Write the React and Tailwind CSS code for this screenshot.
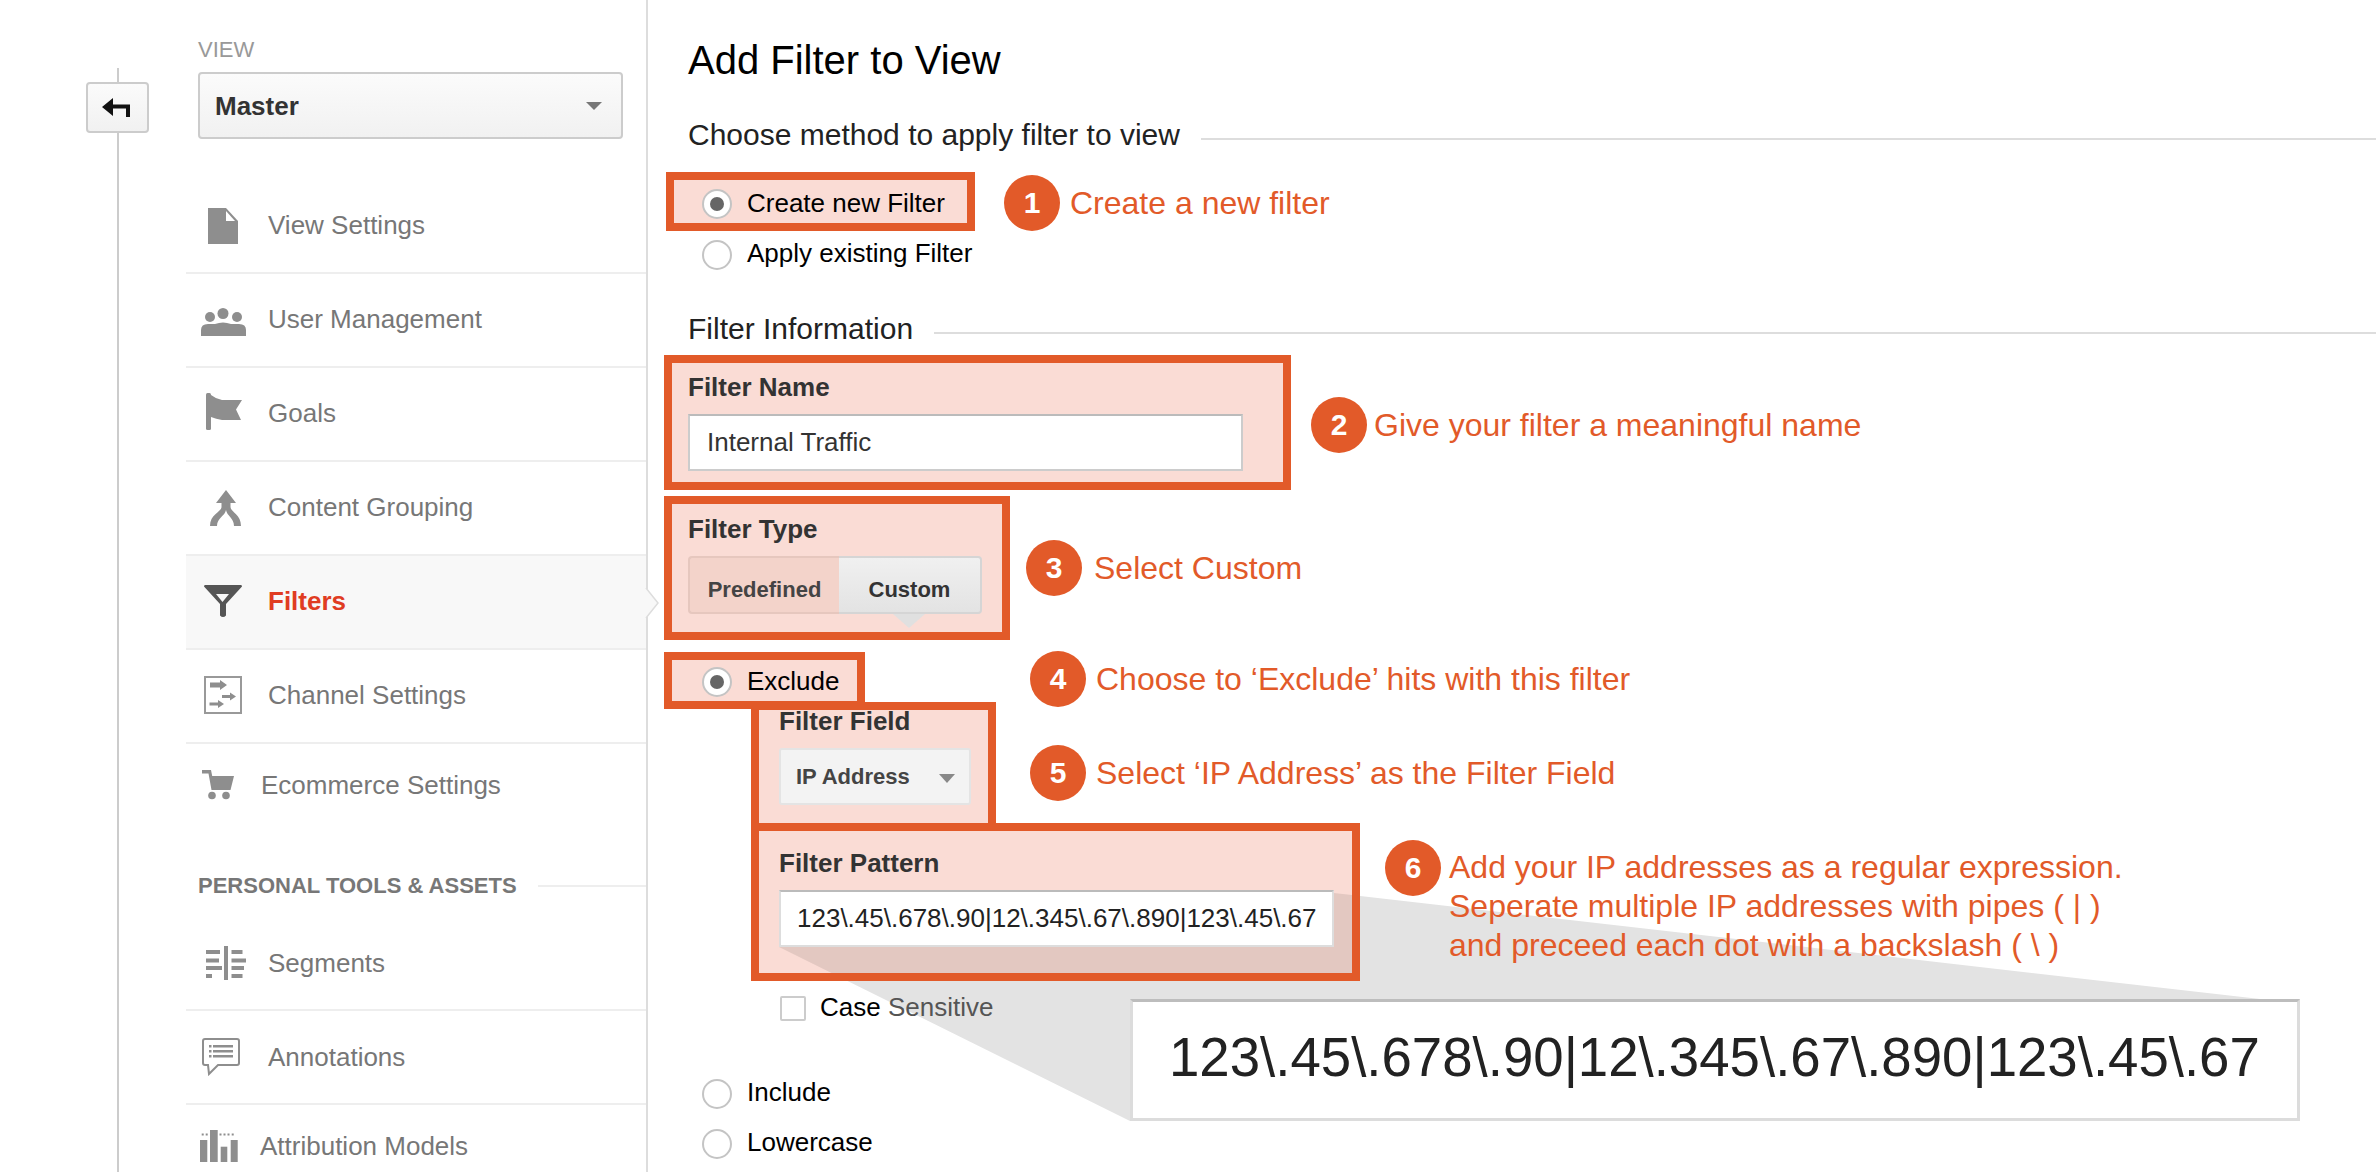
const GRAY = "#8e8e8e";

const FileIcon = () => (
  <svg viewBox="0 0 30 36" className="w-[30px] h-[36px]">
    <path d="M0 0H18L30 13V36H0Z" fill={GRAY} />
    <path d="M18 3L27 13H18Z" fill="#fff" />
  </svg>
);
const UsersIcon = () => (
  <svg viewBox="0 0 45 28" className="w-[45px] h-[28px] translate-y-[2px]">
    <circle cx="22" cy="5.5" r="5.5" fill={GRAY} />
    <circle cx="9" cy="9" r="5" fill={GRAY} />
    <circle cx="36" cy="9" r="5" fill={GRAY} />
    <path d="M0 28V22Q0 16 7 16H14Q22 13 30 16H38Q45 16 45 22V28Z" fill={GRAY} />
  </svg>
);
const FlagIcon = () => (
  <svg viewBox="0 0 36 37" className="w-[36px] h-[37px] -translate-y-[3px]">
    <rect x="0" y="0" width="5" height="37" rx="1.5" fill={GRAY} />
    <path d="M5 2Q10 6 16 7H36L30 16.5L35 27H16Q10 26 5 24Z" fill={GRAY} />
  </svg>
);
const MergeIcon = () => (
  <svg viewBox="0 0 31 36" className="w-[31px] h-[36px]">
    <path
      d="M16 0L26 13H20.5V17C20.5 22 31 24 31 36H24C24 28 17 26 16 20C15 26 7 28 7 36H0C0 24 11.5 22 11.5 17V13H6Z"
      fill={GRAY}
    />
  </svg>
);
const FunnelIcon = () => (
  <svg viewBox="0 0 38 33" className="w-[38px] h-[33px] -translate-y-[1px]">
    <path
      d="M1 0H37Q38 0 38 1.5L22 19V30.5Q19 33.5 16 30.5V19L0 1.5Q0 0 1 0ZM12 9L18.5 17L25 9Z"
      fill="#555555"
      fillRule="evenodd"
    />
  </svg>
);
const ChannelIcon = () => (
  <svg viewBox="0 0 38 38" className="w-[38px] h-[38px] -translate-y-[1px]">
    <rect x="1" y="1" width="36" height="36" fill="none" stroke="#999999" strokeWidth="2" />
    <path d="M6 6.5H16V4L23 9L16 14V11.5H6Z" fill={GRAY} />
    <path d="M18 19H26V16.5L32 20.5L26 24.5V22H18Z" fill={GRAY} />
    <path d="M5.5 26.5H14V24L20 28L14 32V29.5H5.5Z" fill={GRAY} />
  </svg>
);
const CartIcon = () => (
  <svg viewBox="0 0 32 30" className="w-[32px] h-[30px]">
    <path d="M0 0H9L13 20H9.5L6.5 3.5H0Z" fill={GRAY} />
    <path d="M8 6H32L28.5 20H11Z" fill={GRAY} />
    <circle cx="10" cy="25.5" r="3.8" fill={GRAY} />
    <circle cx="24" cy="25.5" r="3.8" fill={GRAY} />
  </svg>
);
const SegmentsIcon = () => (
  <svg viewBox="0 0 40 34" className="w-[40px] h-[34px]" fill={GRAY}>
    <rect x="18" y="0" width="4" height="34" />
    <rect x="0" y="4" width="14" height="4" />
    <rect x="0" y="12.5" width="13" height="4" />
    <rect x="0" y="20" width="16" height="4" />
    <rect x="0" y="28" width="6" height="4" />
    <rect x="25.5" y="4" width="11" height="4" />
    <rect x="25.5" y="12.5" width="14.5" height="4" />
    <rect x="25.5" y="20" width="12.5" height="4" />
    <rect x="25.5" y="28" width="11" height="4" />
  </svg>
);
const AnnotationIcon = () => (
  <svg viewBox="0 0 38 38" className="w-[38px] h-[38px]">
    <path d="M3 1H35Q37 1 37 3V25Q37 27 35 27H16L7 36L6 27H3Q1 27 1 25V3Q1 1 3 1Z" fill="none" stroke="#8e8e8e" strokeWidth="2" />
    <g fill={GRAY}>
      <rect x="7" y="7" width="2.5" height="2.5" />
      <rect x="11" y="7" width="20" height="2.5" />
      <rect x="7" y="12" width="2.5" height="2.5" />
      <rect x="11" y="12" width="20" height="2.5" />
      <rect x="7" y="17" width="2.5" height="2.5" />
      <rect x="11" y="17" width="20" height="2.5" />
    </g>
  </svg>
);
const AttributionIcon = () => (
  <svg viewBox="0 0 38 32" className="w-[38px] h-[32px]" fill={GRAY}>
    <rect x="0" y="10" width="7.3" height="22" />
    <rect x="10" y="0" width="7.7" height="32" />
    <rect x="20.7" y="16.7" width="6.6" height="15.3" />
    <rect x="30.7" y="10" width="7" height="22" />
    <rect x="1.7" y="3.5" width="2" height="2" />
    <rect x="5.7" y="3.5" width="2" height="2" />
    <rect x="19.5" y="3.5" width="2" height="2" />
    <rect x="23.5" y="3.5" width="2" height="2" />
    <rect x="27.5" y="3.5" width="2" height="2" />
    <rect x="31.7" y="3.5" width="2" height="2" />
  </svg>
);

const NavItem = ({ icon, slot, label, active, last, up }) => (
  <div
    className={`flex items-center ${last ? "h-[82px]" : "h-[94px] border-b-2 border-[#eeeeee]"} ${active ? "bg-[#f8f8f8] relative" : ""}`}
  >
    <div className={`${slot} shrink-0`}>{icon}</div>
    <span
      className={`text-[26px] leading-[30px] ${up ? "-translate-y-[1px]" : ""} ${active ? "font-bold text-[#e03c22]" : "text-[#777777]"}`}
    >
      {label}
    </span>
    {active && (
      <svg viewBox="0 0 16 30" className="absolute left-[458px] top-[32px] w-[16px] h-[30px]">
        <path d="M2 0L14 15L2 30Z" fill="#f8f8f8" />
        <path d="M2 0L14 15L2 30" fill="none" stroke="#dddddd" strokeWidth="1.5" />
      </svg>
    )}
  </div>
);

const Sidebar = () => (
  <div className="w-[648px] h-full shrink-0 border-r-2 border-[#dddddd] flex">
    <div className="ml-[86px] w-[63px] pt-[68px] flex flex-col items-center shrink-0">
      <div className="w-[2px] h-[14px] bg-[#cccccc]" />
      <div className="w-[63px] h-[51px] shrink-0 rounded-[4px] border-2 border-[#cccccc] bg-gradient-to-b from-[#fbfbfb] to-[#f1f1f1] flex items-center justify-center">
        <svg viewBox="0 0 28 19" className="w-[28px] h-[19px] -ml-[3px]">
          <path d="M0 9L11 0V6.5H28V19H24V10.5H11V18Z" fill="#111111" />
        </svg>
      </div>
      <div className="w-[2px] flex-1 bg-[#cccccc]" />
    </div>
    <div className="ml-[37px] flex-1 min-w-0">
      <div className="pl-3 pr-[23px] pt-[39px]">
        <div className="text-[22px] leading-[22px] text-[#999999]">VIEW</div>
        <div className="mt-[11px] h-[67px] rounded-[4px] border-2 border-[#cccccc] bg-gradient-to-b from-[#fbfbfb] to-[#f1f1f1] flex items-center justify-between pl-[15px] pr-[19px]">
          <span className="text-[26px] leading-[30px] font-bold text-[#333333]">Master</span>
          <span className="w-0 h-0 border-x-[8px] border-x-transparent border-t-[8px] border-t-[#777777]" />
        </div>
      </div>
      <div className="mt-[41px]">
        <NavItem icon={<FileIcon />} slot="w-[82px] pl-[22px]" label="View Settings" up />
        <NavItem icon={<UsersIcon />} slot="w-[82px] pl-[15px]" label="User Management" up />
        <NavItem icon={<FlagIcon />} slot="w-[82px] pl-[20px]" label="Goals" up />
        <NavItem icon={<MergeIcon />} slot="w-[82px] pl-[24px]" label="Content Grouping" up />
        <NavItem icon={<FunnelIcon />} slot="w-[82px] pl-[18px]" label="Filters" active up />
        <NavItem icon={<ChannelIcon />} slot="w-[82px] pl-[18px]" label="Channel Settings" up />
        <NavItem icon={<CartIcon />} slot="w-[75px] pl-[16px]" label="Ecommerce Settings" last />
      </div>
      <div className="mt-[45px] pl-3 flex items-center gap-[21px]">
        <span className="text-[22px] leading-[30px] font-bold text-[#777777] whitespace-nowrap">PERSONAL TOOLS &amp; ASSETS</span>
        <div className="h-[2px] flex-1 bg-[#eeeeee]" />
      </div>
      <div className="mt-[16px]">
        <NavItem icon={<SegmentsIcon />} slot="w-[82px] pl-[20px]" label="Segments" />
        <NavItem icon={<AnnotationIcon />} slot="w-[82px] pl-[16px]" label="Annotations" />
        <NavItem icon={<AttributionIcon />} slot="w-[74px] pl-[14px]" label="Attribution Models" last />
      </div>
    </div>
  </div>
);

const Radio = ({ checked }) => (
  <span className="w-[30px] h-[30px] shrink-0 rounded-full border-2 border-[#c4c4c4] bg-white flex items-center justify-center">
    {checked && <span className="w-[14px] h-[14px] rounded-full bg-[#666666]" />}
  </span>
);

const Badge = ({ n, className }) => (
  <span className={`w-[56px] h-[56px] shrink-0 rounded-full bg-[#e25a29] text-white font-bold text-[30px] leading-none flex items-center justify-center ${className}`}>
    {n}
  </span>
);

const Note = ({ children, className = "" }) => (
  <span className={`text-[32px] leading-[39px] text-[#e25a29] whitespace-nowrap ${className}`}>{children}</span>
);

const Heading = ({ children, className }) => (
  <div className={`flex items-center gap-[21px] pl-[24px] ${className}`}>
    <span className="text-[30px] leading-[34px] text-[#222222] whitespace-nowrap">{children}</span>
    <div className="h-[2px] flex-1 bg-[#dddddd] mt-[8px]" />
  </div>
);

const Label = ({ children, className = "leading-[30px]" }) => (
  <div className={`relative text-[26px] font-bold text-[#333333] ${className}`}>{children}</div>
);

const Main = () => (
  <div className="relative flex-1 min-w-0 pl-[16px]">
    <h1 className="pt-[36px] pl-[24px] text-[40px] leading-[48px] font-normal text-black">Add Filter to View</h1>
    <Heading className="mt-[34px]">Choose method to apply filter to view</Heading>

    <div className="mt-[20px] ml-[2px] flex items-center">
      <div className="h-[59px] w-[309px] border-8 border-[#e25a29] bg-[#fadcd5] pl-[28px] pt-[5px] flex items-center gap-[15px]">
        <Radio checked />
        <span className="text-[26px] leading-[30px] text-black -translate-y-[1px]">Create new Filter</span>
      </div>
      <Badge n="1" className="ml-[29px] mt-[3px]" />
      <Note className="ml-[10px] mt-[3px]">Create a new filter</Note>
    </div>

    <div className="mt-[9px] ml-[38px] flex items-center gap-[15px] h-[30px]">
      <Radio />
      <span className="text-[26px] leading-[30px] text-black -translate-y-[2px]">Apply existing Filter</span>
    </div>

    <Heading className="mt-[42px]">Filter Information</Heading>

    <div className="mt-[9px] flex items-center">
      <div className="w-[627px] h-[135px] border-8 border-[#e25a29] bg-[#fadcd5] pl-[16px] pt-[9px]">
        <Label>Filter Name</Label>
        <div className="mt-[12px] w-[555px] h-[57px] bg-white border-2 border-[#cccccc] border-t-[#bbbbbb] pl-[17px] flex items-center text-[26px] text-[#333333]">
          Internal Traffic
        </div>
      </div>
      <Badge n="2" className="ml-[20px] mt-[5px]" />
      <Note className="ml-[7px] mt-[5px]">Give your filter a meaningful name</Note>
    </div>

    <div className="mt-[6px] flex items-center">
      <div className="w-[346px] h-[144px] border-8 border-[#e25a29] bg-[#fadcd5] pl-[16px] pt-[10px]">
        <Label>Filter Type</Label>
        <div className="relative mt-[12px] w-[294px] h-[58px] flex text-[22px] font-bold leading-[26px]">
          <div className="w-[151px] rounded-l-[4px] border-2 border-r-0 border-[#e6c7be] bg-[#f3d3ca] text-[#444444] flex items-center justify-center pt-[10px]">
            Predefined
          </div>
          <div className="flex-1 rounded-r-[4px] border-2 border-l-0 border-[#d5d5d5] bg-gradient-to-b from-[#f0f0f0] to-[#e3e3e3] text-[#333333] flex items-center justify-center pt-[10px]">
            Custom
          </div>
          <span className="absolute left-[205px] top-[58px] w-0 h-0 border-x-[16px] border-x-transparent border-t-[14px] border-t-[#e0e0e0]" />
        </div>
      </div>
      <Badge n="3" className="ml-[16px]" />
      <Note className="ml-[12px]">Select Custom</Note>
    </div>

    <div className="mt-[12px] flex items-center">
      <div className="w-[201px] h-[57px] border-8 border-[#e25a29] bg-[#fadcd5] pl-[30px] pt-[3px] flex items-center gap-[15px]">
        <Radio checked />
        <span className="text-[26px] leading-[30px] text-black -translate-y-[1px]">Exclude</span>
      </div>
      <Badge n="4" className="ml-[165px] -mt-[3px]" />
      <Note className="ml-[10px] -mt-[3px]">Choose to ‘Exclude’ hits with this filter</Note>
    </div>

    <div className="relative -mt-[7px] ml-[87px] flex items-center">
      <div className="w-[245px] h-[130px] border-8 border-[#e25a29] bg-[#fadcd5] pl-[20px]">
        <Label className="leading-[22px]">Filter Field</Label>
        <div className="mt-[16px] w-[192px] h-[57px] rounded-[3px] border-2 border-[#e4e4e4] bg-[#f3f3f3] pl-[15px] pr-[14px] flex items-center justify-between text-[22px] font-bold text-[#444444]">
          IP Address
          <span className="w-0 h-0 border-x-[8px] border-x-transparent border-t-[9px] border-t-[#888888] mt-[3px]" />
        </div>
      </div>
      <Badge n="5" className="ml-[34px] mt-[12px]" />
      <Note className="ml-[10px] mt-[12px]">Select ‘IP Address’ as the Filter Field</Note>
    </div>

    <div className="relative -mt-[9px] ml-[87px] flex items-start">
      <div className="relative w-[609px] h-[158px] border-8 border-[#e25a29] bg-[#fadcd5] pl-[20px] pt-[17px] overflow-hidden shrink-0">
        <svg viewBox="0 0 593 142" className="absolute left-0 top-0 w-[593px] h-[142px]">
          <polygon points="20,116 371,290 371,168 1501,168 575,62" fill="#000000" fillOpacity="0.09" />
        </svg>
        <Label>Filter Pattern</Label>
        <div className="relative mt-[12px] w-[555px] h-[57px] bg-white border-2 border-[#dddddd] border-t-[#bbbbbb] pl-[16px] flex items-center text-[26px] text-[#222222] whitespace-nowrap">
          {"123\\.45\\.678\\.90|12\\.345\\.67\\.890|123\\.45\\.67"}
        </div>
      </div>
      <Badge n="6" className="ml-[25px] mt-[17px]" />
      <div className="ml-[8px] mt-[25px] flex flex-col">
        <Note>Add your IP addresses as a regular expression.</Note>
        <Note>Seperate multiple IP addresses with pipes ( | )</Note>
        <Note>and preceed each dot with a backslash ( \ )</Note>
      </div>
    </div>

    <div className="mt-[12px] ml-[116px] flex items-center">
      <span className="w-[26px] h-[25px] rounded-[2px] border-2 border-[#cccccc] bg-white shrink-0" />
      <span className="ml-[14px] text-[26px] leading-[30px] text-black -translate-y-[1px]">
        Case <span className="text-[#555555]">Sensitive</span>
      </span>
    </div>

    <div className="mt-[56px] ml-[38px] flex items-center gap-[15px] h-[30px]">
      <Radio />
      <span className="text-[26px] leading-[30px] text-black -translate-y-[2px]">Include</span>
    </div>
    <div className="mt-[20px] ml-[38px] flex items-center gap-[15px] h-[30px]">
      <Radio />
      <span className="text-[26px] leading-[30px] text-black -translate-y-[2px]">Lowercase</span>
    </div>
  </div>
);

export default function App() {
  return (
    <div className="relative w-[2376px] h-[1172px] overflow-hidden bg-white flex [font-family:'Liberation_Sans',Arial,sans-serif]">
      <svg viewBox="0 0 2376 1172" className="absolute left-0 top-0 w-[2376px] h-[1172px]">
        <polygon points="779,947 1130,1121 1130,999 2260,999 1334,893" fill="#e3e3e3" />
      </svg>
      <div className="relative flex w-full h-full">
        <Sidebar />
        <Main />
      </div>
      <div className="absolute left-[1130px] top-[999px] w-[1170px] h-[122px] bg-white border-[3px] border-[#dcdcdc] border-t-[#bdbdbd] pl-[36px] pb-[4px] flex items-center text-[54.6px] text-[#222222] whitespace-nowrap">
        {"123\\.45\\.678\\.90|12\\.345\\.67\\.890|123\\.45\\.67"}
      </div>
    </div>
  );
}
